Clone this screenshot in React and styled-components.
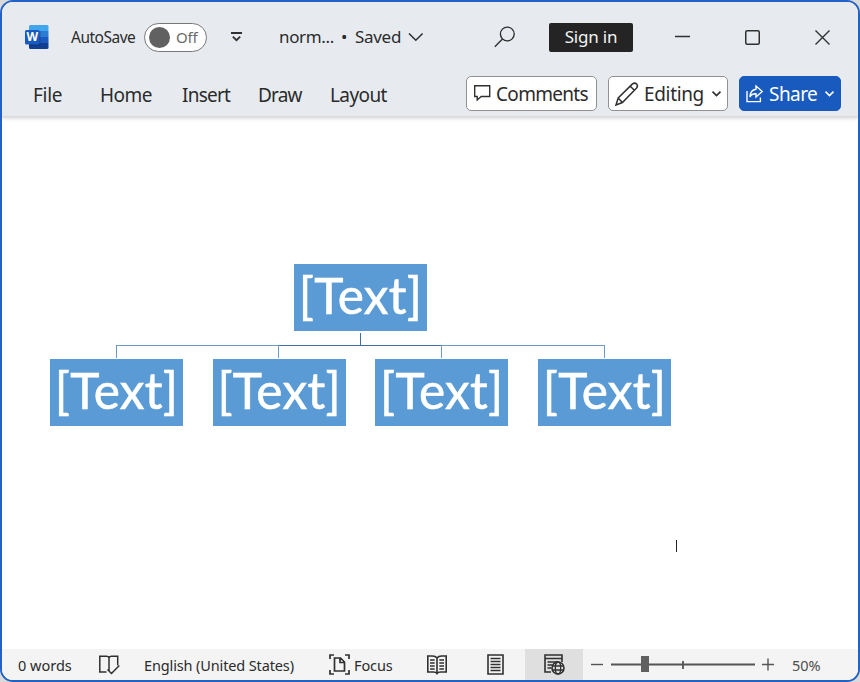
import React from "react";
import styled, { createGlobalStyle, css } from "styled-components";

const Global = createGlobalStyle`
  * { box-sizing: border-box; }
  body { margin: 0; background: #d9dadb; overflow: hidden; }
  svg { display: block; flex: none; overflow: visible; }
`;

const Window = styled.div`
  width: 860px;
  height: 682px;
  display: flex;
  flex-direction: column;
  border: 2px solid #2262c4;
  border-radius: 13px;
  overflow: hidden;
  background: #fff;
  color: #2b2b2b;
  font-family: "Noto Sans", "Open Sans", sans-serif;
`;

const Header = styled.header`
  flex: none;
  height: 115px;
  background: #e7ebf0;
  border-bottom: 1px solid #d8dadd;
  box-shadow: 0 1px 4px rgba(0, 0, 0, 0.2);
`;

const TitleBar = styled.div`
  display: flex;
  align-items: center;
  height: 70px;
  padding-left: 22px;
`;

const Ribbon = styled.nav`
  display: flex;
  align-items: center;
  height: 44px;
  padding: 2px 0 0 31px;
`;

const Slot = styled.div`
  flex: none;
  display: flex;
  align-items: center;
  width: ${(p) => p.$w}px;
  margin-left: ${(p) => p.$gap || 0}px;
`;

const Label = styled.span`
  flex: none;
  display: block;
  width: ${(p) => p.$w}px;
  margin-left: ${(p) => p.$gap || 0}px;
  font-size: ${(p) => p.$size}px;
  line-height: 24px;
  letter-spacing: ${(p) => p.$track || 0}px;
  white-space: nowrap;
  color: ${(p) => p.$color || "inherit"};
`;

const Toggle = styled.div`
  flex: none;
  display: flex;
  align-items: center;
  width: 63px;
  height: 29px;
  margin-left: 7px;
  padding-left: 4px;
  border: 1px solid #777;
  border-radius: 15px;
  background: #fff;
`;

const Knob = styled.div`
  flex: none;
  width: 21px;
  height: 21px;
  border-radius: 50%;
  background: #616161;
`;

const buttonBase = css`
  flex: none;
  display: flex;
  align-items: center;
  margin: 0 0 0 ${(p) => p.$gap}px;
  padding: 0;
  font-family: inherit;
  color: inherit;
`;

const SignIn = styled.button`
  ${buttonBase}
  width: 84px;
  height: 29px;
  border: 0;
  border-radius: 2px;
  background: #242424;
  color: #f4f4f4;
`;

const ActionButton = styled.button`
  ${buttonBase}
  width: ${(p) => p.$w}px;
  height: 35px;
  margin-top: -3px;
  border: 1px solid ${(p) => (p.$primary ? "#185abd" : "#919191")};
  border-radius: 5px;
  background: ${(p) => (p.$primary ? "#185abd" : "#fff")};
  color: ${(p) => (p.$primary ? "#fff" : "#2b2b2b")};
`;

const Page = styled.main`
  flex: 1;
  display: flex;
  flex-direction: column;
  padding: 147px 0 0 48px;
`;

const Chart = styled.div`
  width: 621px;
  display: flex;
  flex-direction: column;
  align-items: center;
`;

const Row = styled.div`
  display: flex;
  justify-content: space-between;
  width: 100%;
`;

const Node = styled.div`
  width: 133px;
  height: 67px;
  background: #5b9bd5;
  color: #fff;
  font-family: Lato, "Noto Sans", sans-serif;
  font-size: 49.5px;
  line-height: 62px;
  text-align: center;
  letter-spacing: 0.3px;
  -webkit-text-stroke: 0.6px #fff;
`;

const Caret = styled.div`
  width: 1px;
  height: 12px;
  margin: 114px 0 0 626px;
  background: #222;
`;

const StatusBar = styled.footer`
  flex: none;
  display: flex;
  align-items: center;
  height: 31px;
  padding-left: 16px;
  background: #f4f4f4;
`;

const ActiveView = styled.div`
  flex: none;
  display: flex;
  align-items: center;
  justify-content: center;
  width: 58px;
  height: 31px;
  margin-left: 21px;
  background: #dfdfdf;
`;

function Icon({ w, h, stroke = "#303030", sw = 1.4, children }) {
  return (
    <svg width={w} height={h} viewBox={`0 0 ${w} ${h}`} fill="none" stroke={stroke} strokeWidth={sw}>
      {children}
    </svg>
  );
}

function WordLogo() {
  return (
    <svg width="25" height="24" viewBox="0 0 25 24">
      <clipPath id="sheet"><rect x="5" width="19.5" height="24" rx="1.5" /></clipPath>
      <g clipPath="url(#sheet)">
        <rect x="5" width="20" height="6" fill="#41a5ee" />
        <rect x="5" y="6" width="20" height="6" fill="#2b7cd3" />
        <rect x="5" y="12" width="20" height="6" fill="#185abd" />
        <rect x="5" y="18" width="20" height="6" fill="#103f91" />
        <rect x="5" y="6" width="11.5" height="15" fill="#0b2f70" opacity=".4" />
      </g>
      <rect x="1" y="5" width="14.5" height="14.5" rx="1.5" fill="#185abd" />
      <text x="8.2" y="16.4" textAnchor="middle" fill="#fff" fontFamily="Open Sans, sans-serif" fontSize="12" fontWeight="700">W</text>
    </svg>
  );
}

export default function App() {
  return (
    <>
      <Global />
      <Window>
        <Header>
          <TitleBar>
            <Slot $w={25}><WordLogo /></Slot>
            <Label $w={66} $gap={22} $size={15.5} $track={-0.5}>AutoSave</Label>
            <Toggle>
              <Knob />
              <Label $w={26} $gap={6} $size={15} $track={-0.2} $color="#6b6b6b">Off</Label>
            </Toggle>
            <Slot $w={11} $gap={24}>
              <Icon w={11} h={10} sw={1.8}><path d="M0 1h11M1.8 4.7l3.7 3.5 3.7-3.5" /></Icon>
            </Slot>
            <Label $w={56} $gap={37} $size={17} $track={-0.35}>norm...</Label>
            <Label $w={8} $gap={6} $size={17}>•</Label>
            <Label $w={48} $gap={6} $size={17} $track={-0.3}>Saved</Label>
            <Slot $w={16} $gap={5}>
              <Icon w={16} h={8} sw={1.6}><path d="M1 .5l6.8 6.7L14.600 .5" /></Icon>
            </Slot>
            <Slot $w={21} $gap={70}>
              <Icon w={21} h={22} sw={1.4}><circle cx="13.300" cy="8" r="6.900" /><path d="M8.500 13L.8 20.800" /></Icon>
            </Slot>
            <SignIn $gap={34}>
              <Label $w={54} $gap={15} $size={17} $track={-0.2}>Sign in</Label>
            </SignIn>
            <Slot $w={15} $gap={42}><Icon w={15} h={15}><path d="M0 6.500h15" /></Icon></Slot>
            <Slot $w={15} $gap={55}><Icon w={15} h={15} sw={1.5}><rect x=".75" y=".75" width="13.500" height="13.500" rx="1.500" /></Icon></Slot>
            <Slot $w={15} $gap={55}><Icon w={15} h={15}><path d="M.5 .5l14 14M14.500 .5l-14 14" /></Icon></Slot>
          </TitleBar>
          <Ribbon>
            <Label $w={30} $size={19} $track={-0.3}>File</Label>
            <Label $w={53} $gap={37} $size={19} $track={-0.5}>Home</Label>
            <Label $w={47} $gap={29} $size={19} $track={-0.95 + 0.2}>Insert</Label>
            <Label $w={45} $gap={29} $size={19} $track={-0.8}>Draw</Label>
            <Label $w={58} $gap={27} $size={19} $track={-0.6}>Layout</Label>
            <ActionButton $gap={78} $w={131}>
              <Slot $w={16} $gap={7}>
                <Icon w={16} h={18} sw={1.4}><path d="M.7 .7h15v10.800H7.200L3.200 15v-3.500H.7z" /></Icon>
              </Slot>
              <Label $w={92} $gap={6} $size={19} $track={-0.7}>Comments</Label>
            </ActionButton>
            <ActionButton $gap={11} $w={120}>
              <Slot $w={24} $gap={6}>
                <Icon w={24} h={24} sw={1.5}>
                  <path d="M1 23l2.200-7L17.500 1.900q2.200-1.600 4.100.1 1.700 1.900 0 3.900L7.400 20.500zM15.200 4.200l4.200 4.100M3.200 16l4.200 4.500" />
                </Icon>
              </Slot>
              <Label $w={60} $gap={5} $size={19} $track={-0.35}>Editing</Label>
              <Slot $w={9} $gap={8}><Icon w={9} h={6} sw={1.7}><path d="M.5 .7l4 3.800 4-3.800" /></Icon></Slot>
            </ActionButton>
            <ActionButton $gap={11} $w={102} $primary>
              <Slot $w={17} $gap={6}>
                <Icon w={17} h={18} sw={1.4} stroke="#fff">
                  <path d="M1 6v10.600h13.400v-4M10 1l6.200 5.500L10 12V8.800Q5.500 8.500 4 12 4.200 4.800 10 4.200z" />
                </Icon>
              </Slot>
              <Label $w={48} $gap={6} $size={19} $track={-0.55}>Share</Label>
              <Slot $w={9} $gap={8}><Icon w={9} h={6} sw={1.7} stroke="#fff"><path d="M.5 .7l4 3.800 4-3.800" /></Icon></Slot>
            </ActionButton>
          </Ribbon>
        </Header>

        <Page>
          <Chart>
            <Node>[Text]</Node>
            <svg width="621" height="28" fill="none" shapeRendering="crispEdges">
              <path d="M66.500 27V14.500H554.500V27M228.500 14.500V27M391.500 14.500V27" stroke="#6f99c3" />
              <path d="M310.500 2V14.500M229 14.500H391" stroke="#416f9e" />
            </svg>
            <Row>
              <Node>[Text]</Node>
              <Node>[Text]</Node>
              <Node>[Text]</Node>
              <Node>[Text]</Node>
            </Row>
          </Chart>
          <Caret />
        </Page>

        <StatusBar>
          <Label $w={56} $size={14.5} $track={0}>0 words</Label>
          <Slot $w={21} $gap={25}>
            <Icon w={21} h={20} sw={1.5}>
              <path d="M7.500 17H.8V1.300h6.700q2 0 2.500 1.500Q10.500 1.300 12.500 1.300h6.200v9M10 2.800v13M8.500 14.500l4 4L20.300 10.500" />
            </Icon>
          </Slot>
          <Label $w={152} $gap={24} $size={14.5} $track={-0.13}>English (United States)</Label>
          <Slot $w={21} $gap={33}>
            <Icon w={21} h={21} sw={1.7}>
              <path d="M1 5V1h4M16 1h4v4M1 16v4h4M16 20h4v-4" />
              <path d="M5.500 4h6l4 4v9h-10zM11 4v4.500h4.500" />
            </Icon>
          </Slot>
          <Label $w={40} $gap={4} $size={14.5} $track={-0.1}>Focus</Label>
          <Slot $w={20} $gap={33}>
            <Icon w={20} h={20} sw={1.6}>
              <path d="M10 3Q8.500 1 5.500 1H.8v16h5.700q2.500 0 3.500 1.500Q11 17 13.500 17h5.700V1h-4.700Q11.500 1 10 3v15" />
              <path d="M3 5h4.700M3 8h4.700M3 11h4.700M3 14h4.700M12.300 5H17M12.300 8H17M12.300 11H17M12.300 14H17" />
            </Icon>
          </Slot>
          <Slot $w={17} $gap={40}>
            <Icon w={17} h={21} sw={1.6}>
              <path d="M1 1h15v19H1zM3.500 4.500h10M3.500 7.500h10M3.500 10.500h10M3.500 13.500h10M3.500 16.500h10" />
            </Icon>
          </Slot>
          <ActiveView>
            <Icon w={21} h={21} sw={1.6}>
              <path d="M7 18H1V1h17v7M1 4.500h17M3.500 8h11M3.500 11h5M3.500 14h4" />
              <circle cx="14" cy="14" r="6" />
              <ellipse cx="14" cy="14" rx="2.700" ry="6" strokeWidth="1.300" />
              <path d="M8.500 12h11M8.500 16h11" strokeWidth="1.300" />
            </Icon>
          </ActiveView>
          <Slot $w={12} $gap={8}><Icon w={12} h={12} stroke="#555"><path d="M0 5.500h12" /></Icon></Slot>
          <Slot $w={144} $gap={8}>
            <Icon w={144} h={18} stroke="#555">
              <path d="M0 8.500h144M72 5v8" strokeWidth="1.800" />
              <rect x="30" y="0" width="8" height="16" fill="#606060" stroke="none" />
            </Icon>
          </Slot>
          <Slot $w={12} $gap={7}><Icon w={12} h={12} stroke="#555"><path d="M0 5.500h12M6 -.5v12" /></Icon></Slot>
          <Label $w={31} $gap={18} $size={14.5} $track={0} $color="#4c4c4c">50%</Label>
        </StatusBar>
      </Window>
    </>
  );
}
